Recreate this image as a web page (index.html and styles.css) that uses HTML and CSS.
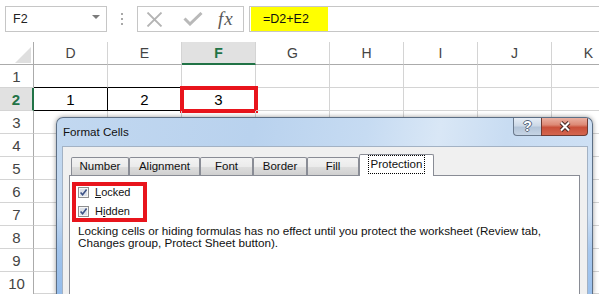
FILE: index.html
```html
<!DOCTYPE html>
<html>
	<head>
		<meta charset="UTF-8">
		<title>Format Cells</title>
		<link rel="stylesheet" href="styles.css">
	</head>
	<body>

		<!-- formula bar -->
		<div class="fbar">
			<div class="namebox"><span>F2</span><span class="namebox_arr"></span></div>
			<div class="fbar_dots"><i></i><i></i><i></i></div>
			<div class="fbar_btns">
				<svg class="ico_x" width="17" height="15" viewBox="0 0 17 15"><path d="M1.5 0.5L15.5 14.5M15.5 0.5L1.5 14.5" stroke="#b4b4b4" stroke-width="1.8" fill="none"/></svg>
				<svg class="ico_ok" width="20" height="14" viewBox="0 0 20 14"><path d="M1.5 6.5L7 12L18.5 1" stroke="#b9b9b9" stroke-width="3" fill="none"/></svg>
				<span class="ico_fx">fx</span>
			</div>
			<div class="fbar_input"><span class="fbar_val">=D2+E2</span></div>
		</div>

		<!-- sheet -->
		<div class="sheet">
			<div class="hd hd_corner"><svg width="16" height="16" viewBox="0 0 16 16"><path d="M16 0V16H0Z" fill="#dfdfdf"/></svg></div>
			<div class="hd hd_col">D</div>
			<div class="hd hd_col">E</div>
			<div class="hd hd_col hd_sel">F</div>
			<div class="hd hd_col">G</div>
			<div class="hd hd_col">H</div>
			<div class="hd hd_col">I</div>
			<div class="hd hd_col">J</div>
			<div class="hd hd_col">K</div>

			<div class="hd hd_row">1</div>
			<div class="cell cell_top"></div><div class="cell cell_top"></div><div class="cell"></div><div class="cell"></div><div class="cell"></div><div class="cell"></div><div class="cell"></div><div class="cell"></div>

			<div class="hd hd_row hd_rowsel">2</div>
			<div class="cell cell_b">1</div><div class="cell cell_b">2</div><div class="cell cell_active">3</div><div class="cell"></div><div class="cell"></div><div class="cell"></div><div class="cell"></div><div class="cell"></div>

			<div class="hd hd_row">3</div>
			<div class="cell"></div><div class="cell"></div><div class="cell"></div><div class="cell"></div><div class="cell"></div><div class="cell"></div><div class="cell"></div><div class="cell"></div>
			<div class="hd hd_row">4</div>
			<div class="cell"></div><div class="cell"></div><div class="cell"></div><div class="cell"></div><div class="cell"></div><div class="cell"></div><div class="cell"></div><div class="cell"></div>
			<div class="hd hd_row">5</div>
			<div class="cell"></div><div class="cell"></div><div class="cell"></div><div class="cell"></div><div class="cell"></div><div class="cell"></div><div class="cell"></div><div class="cell"></div>
			<div class="hd hd_row">6</div>
			<div class="cell"></div><div class="cell"></div><div class="cell"></div><div class="cell"></div><div class="cell"></div><div class="cell"></div><div class="cell"></div><div class="cell"></div>
			<div class="hd hd_row">7</div>
			<div class="cell"></div><div class="cell"></div><div class="cell"></div><div class="cell"></div><div class="cell"></div><div class="cell"></div><div class="cell"></div><div class="cell"></div>
			<div class="hd hd_row">8</div>
			<div class="cell"></div><div class="cell"></div><div class="cell"></div><div class="cell"></div><div class="cell"></div><div class="cell"></div><div class="cell"></div><div class="cell"></div>
			<div class="hd hd_row">9</div>
			<div class="cell"></div><div class="cell"></div><div class="cell"></div><div class="cell"></div><div class="cell"></div><div class="cell"></div><div class="cell"></div><div class="cell"></div>
			<div class="hd hd_row hd_last">10</div>
			<div class="cell cell_last"></div><div class="cell cell_last"></div><div class="cell cell_last"></div><div class="cell cell_last"></div><div class="cell cell_last"></div><div class="cell cell_last"></div><div class="cell cell_last"></div><div class="cell cell_last"></div>
		</div>

		<!-- Format Cells dialog -->
		<div class="dlg">
			<div class="dlg_title">
				<span class="dlg_caption">Format Cells</span>
				<div class="dlg_ctrl">
					<span class="btn_help">?</span>
					<span class="btn_close">
						<svg width="12" height="11" viewBox="0 0 12 11"><path d="M2 1.5L10 9.5M10 1.5L2 9.5" stroke="#4b2a24" stroke-width="4" fill="none"/><path d="M2 1.5L10 9.5M10 1.5L2 9.5" stroke="#fff" stroke-width="2" fill="none"/></svg>
					</span>
				</div>
			</div>
			<div class="dlg_client">
				<ul class="tabs">
					<li class="tab tab_num">Number</li>
					<li class="tab tab_align">Alignment</li>
					<li class="tab tab_font">Font</li>
					<li class="tab tab_border">Border</li>
					<li class="tab tab_fill">Fill</li>
					<li class="tab tab_prot selected"><span>Protection</span></li>
				</ul>
				<div class="panel">
					<div class="chk_group">
						<label class="chk">
							<svg class="chk_box" width="11" height="11" viewBox="0 0 11 11"><rect x="0.5" y="0.5" width="10" height="10" fill="#f6f6f6" stroke="#8f8f8f"/><rect x="2" y="2" width="7" height="7" fill="#dde1e8"/><path d="M2.6 5.4L4.6 7.8L8.6 2.6" stroke="#3d5286" stroke-width="1.6" fill="none"/></svg>
							<span><u>L</u>ocked</span>
						</label>
						<label class="chk">
							<svg class="chk_box" width="11" height="11" viewBox="0 0 11 11"><rect x="0.5" y="0.5" width="10" height="10" fill="#f6f6f6" stroke="#8f8f8f"/><rect x="2" y="2" width="7" height="7" fill="#dde1e8"/><path d="M2.6 5.4L4.6 7.8L8.6 2.6" stroke="#3d5286" stroke-width="1.6" fill="none"/></svg>
							<span>H<u>i</u>dden</span>
						</label>
					</div>
					<p class="note">Locking cells or hiding formulas has no effect until you protect the worksheet (Review tab,<br>Changes group, Protect Sheet button).</p>
				</div>
			</div>
		</div>

	</body>
</html>
```

FILE: styles.css
```css
*{padding: 0;margin: 0;box-sizing: border-box;}

html,body{width: 599px;height: 294px;overflow: hidden;background: #fff;}
body{font-family: "Liberation Sans", Arial, sans-serif;color: #000;position: relative;}
li{list-style: none;}

/* formula bar */
.fbar{display: flex;align-items: flex-start;height: 42px;padding: 6px 0 0 5px;}
.namebox{width: 102px;height: 26px;border: 1px solid #c6c6c6;display: flex;align-items: center;justify-content: space-between;padding: 0 6px 0 7px;font-size: 12.5px;color: #222;}
.namebox_arr{width: 0;height: 0;border-left: 4px solid transparent;border-right: 4px solid transparent;border-top: 4px solid #7b7b7b;margin-bottom: 5px;}
.fbar_dots{display: flex;flex-direction: column;gap: 3px;margin: 7px 14px 0 14px;}
.fbar_dots>i{display: block;width: 2px;height: 2px;background: #a8a8a8;}
.fbar_btns{width: 107px;height: 26px;border: 1px solid #c6c6c6;display: flex;align-items: center;padding-left: 8px;}
.ico_x{margin-right: 20px;}
.ico_ok{margin-right: 15px;}
.ico_fx{font-family: "Liberation Serif", "Times New Roman", serif;font-style: italic;font-size: 19px;color: #595959;letter-spacing: 1px;}
.fbar_input{flex: 1;height: 26px;margin-left: 5px;border: 1px solid #c6c6c6;border-right: 0;padding-left: 1px;}
.fbar_val{display: block;width: 77px;height: 24px;line-height: 24px;background: #ffff00;padding-left: 12px;font-size: 12.5px;color: #111;}

/* sheet */
.sheet{display: grid;grid-template-columns: 34px repeat(8, 74px);grid-template-rows: repeat(10, 23px) 22px;width: 626px;}
.hd{display: flex;align-items: center;justify-content: center;font-size: 14px;color: #444;border-right: 1px solid #d4d4d4;border-bottom: 1px solid #d4d4d4;}
.hd_col{border-bottom-color: #ababab;}
.hd_row{border-right-color: #ababab;font-size: 15px;}
.hd_last,.cell_last{border-bottom: 0;}
.hd_corner{border-right-color: #ababab;border-bottom-color: #ababab;align-items: flex-end;justify-content: flex-end;padding: 0 2px 1px 0;}
.hd_sel{background: #e1e1e1;color: #217346;font-weight: bold;border-bottom: 2px solid #217346;}
.hd_rowsel{background: #e1e1e1;color: #217346;font-weight: bold;border-right: 2px solid #217346;}
.cell{display: flex;align-items: center;justify-content: center;font-size: 15px;border-right: 1px solid #d4d4d4;border-bottom: 1px solid #d4d4d4;}
.cell_top{border-bottom-color: #000;}
.cell_b{border-right-color: #000;border-bottom-color: #000;}
.cell_active{outline: 4px solid #e8141c;outline-offset: -2px;}

/* dialog */
.dlg{position: absolute;left: 56px;top: 117px;width: 537px;height: 177px;overflow: hidden;border: 1px solid #5d6f85;border-bottom: 0;border-radius: 7px 7px 0 0;
	background: linear-gradient(to bottom, rgba(255,255,255,0) 55%, rgba(120,170,230,.45) 75%, rgba(110,165,230,.55) 100%),
		linear-gradient(100deg, #c2d8f0 0%, #b9d2ee 35%, #c6dbf2 55%, #d9e7f6 68%, #c8dcf2 80%, #cfe1f5 100%);
	box-shadow: 0 0 5px rgba(0,0,0,.4);}
.dlg_title{display: flex;justify-content: space-between;align-items: flex-start;height: 28px;}
.dlg_caption{padding: 6px 0 0 6px;font-size: 11.6px;line-height: 15px;color: #111;}
.dlg_ctrl{display: flex;margin-right: 4px;}
.btn_help{width: 28px;height: 18px;border: 1px solid #6b7a8d;border-top: 0;border-right: 0;border-radius: 0 0 0 4px;background: linear-gradient(#e6edf6, #cdd9e7 45%, #b4c5d9 55%, #c6d4e4);text-align: center;font-size: 14px;line-height: 17px;font-weight: bold;color: #fff;text-shadow: -1px 0 #59687c, 1px 0 #59687c, 0 -1px #59687c, 0 1px #59687c;}
.btn_close{width: 47px;height: 18px;border: 1px solid #6e3b33;border-top: 0;border-radius: 0 0 4px 0;background: linear-gradient(#eab0a2, #dd8a76 40%, #c9503a 55%, #d4664f);display: flex;align-items: center;justify-content: center;}
.dlg_client{margin: 0 4px 0 5px;height: 148px;background: #f0f0f0;border: 1px solid #a3b2c4;border-bottom: 0;padding-top: 7px;}

.tabs{display: flex;align-items: flex-end;height: 21px;margin-left: 8px;}
.tab{height: 18px;border: 1px solid #898c95;border-bottom: 0;border-radius: 2px 2px 0 0;background: linear-gradient(#f3f3f3, #ebebeb 50%, #dedede 50%, #d0d0d0);font-size: 11.5px;line-height: 17px;text-align: center;color: #111;}
.tab_num{width: 58px;}
.tab_align{width: 71px;}
.tab_font{width: 53px;}
.tab_border{width: 54px;}
.tab_fill{width: 52px;}
.tab_prot{width: 75px;}
.tab.selected{height: 22px;margin-bottom: -1px;background: #fff;position: relative;z-index: 1;}
.tab.selected>span{display: inline-block;height: 17px;line-height: 16px;margin-top: 1px;padding: 0 2px;outline: 1px dotted #000;}

.panel{margin: 0 7px 0 6px;height: 119px;background: #fff;border: 1px solid #898c95;border-bottom: 0;padding-top: 6px;}
.chk_group{width: 75px;height: 40px;margin-left: 2px;border: 4px solid #e8141c;padding-left: 2px;}
.chk{display: flex;align-items: flex-start;height: 19px;font-size: 11px;line-height: 13px;color: #111;}
.chk_box{margin: 1px 6px 0 0;flex: none;}
.note{margin: 3px 0 0 8px;font-size: 11.7px;line-height: 12px;color: #111;}
```
